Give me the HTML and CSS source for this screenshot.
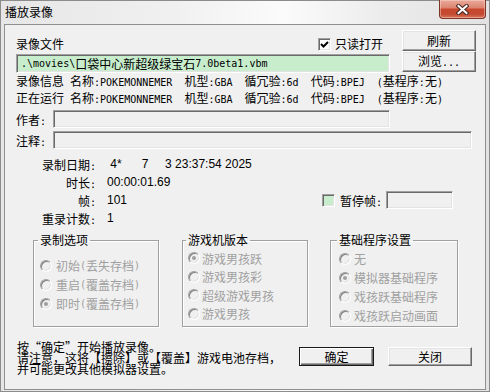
FILE: index.html
```html
<!DOCTYPE html>
<html lang="zh-CN">
<head>
    <meta charset="UTF-8">
    <title>播放录像</title>
    <link rel="stylesheet" href="styles.css">
</head>
<body>

    <div class="window">
        <div class="titlebar">
            <span class="title">播放录像</span>
            <div class="close">
                <svg width="13" height="11" viewBox="0 0 13 11">
                    <path d="M2.5 2 L10.5 9 M10.5 2 L2.5 9" stroke="#4a2a24" stroke-width="4.2" stroke-linecap="square"/>
                    <path d="M2.5 2 L10.5 9 M10.5 2 L2.5 9" stroke="#fff" stroke-width="2" stroke-linecap="square"/>
                </svg>
            </div>
        </div>

        <div class="client">
            <div class="top">
                <div class="file-col">
                    <div class="file-head">
                        <span>录像文件</span>
                        <span class="check">
                            <span class="box">
                                <svg width="9" height="9" viewBox="0 0 9 9"><path d="M1 4 L3.5 6.5 L8 2" stroke="#000" stroke-width="2" fill="none"/></svg>
                            </span>只读打开
                        </span>
                    </div>
                    <div class="field green path"><span class="m">.\movies\</span>口袋中心新超级绿宝石<span class="m">7.0beta1.vbm</span></div>
                </div>
                <div class="side-btns">
                    <button class="btn">刷新</button>
                    <button class="btn">浏览<span class="m">...</span></button>
                </div>
            </div>

            <div class="info">录像信息<span class="m"> </span>名称<span class="m">:POKEMONNEMER  </span>机型<span class="m">:GBA  </span>循冗验<span class="m">:6d  </span>代码<span class="m">:BPEJ  (</span>基程序<span class="m">:</span>无<span class="m">)</span></div>
            <div class="info">正在运行<span class="m"> </span>名称<span class="m">:POKEMONNEMER  </span>机型<span class="m">:GBA  </span>循冗验<span class="m">:6d  </span>代码<span class="m">:BPEJ  (</span>基程序<span class="m">:</span>无<span class="m">)</span></div>

            <div class="row">
                <span class="row-label">作者<span class="m">:</span></span>
                <div class="field author"></div>
            </div>
            <div class="row">
                <span class="row-label">注释<span class="m">:</span></span>
                <div class="field note-in"></div>
            </div>

            <div class="stats">
                <div class="stat">
                    <span class="lbl">录制日期<span class="m">:</span></span>
                    <span class="val date"> 4*      7     3 23:37:54 2025</span>
                </div>
                <div class="stat">
                    <span class="lbl">时长<span class="m">:</span></span>
                    <span class="val">00:00:01.69</span>
                </div>
                <div class="stat">
                    <span class="lbl">帧<span class="m">:</span></span>
                    <span class="val">101</span>
                    <span class="pause">
                        <span class="box green"></span>
                        <span>暂停帧<span class="m">:</span></span>
                        <span class="field pause-in"></span>
                    </span>
                </div>
                <div class="stat">
                    <span class="lbl">重录计数<span class="m">:</span></span>
                    <span class="val">1</span>
                </div>
            </div>

            <div class="groups">
                <fieldset class="grp g1">
                    <legend>录制选项</legend>
                    <div class="opt"><span class="radio"></span>初始<span class="m">(</span>丢失存档<span class="m">)</span></div>
                    <div class="opt"><span class="radio"></span>重启<span class="m">(</span>覆盖存档<span class="m">)</span></div>
                    <div class="opt"><span class="radio on"></span>即时<span class="m">(</span>覆盖存档<span class="m">)</span></div>
                </fieldset>
                <fieldset class="grp g2">
                    <legend>游戏机版本</legend>
                    <div class="opt"><span class="radio on"></span>游戏男孩跃</div>
                    <div class="opt"><span class="radio"></span>游戏男孩彩</div>
                    <div class="opt"><span class="radio"></span>超级游戏男孩</div>
                    <div class="opt"><span class="radio"></span>游戏男孩</div>
                </fieldset>
                <fieldset class="grp g3">
                    <legend>基础程序设置</legend>
                    <div class="opt"><span class="radio"></span>无</div>
                    <div class="opt"><span class="radio on"></span>模拟器基础程序</div>
                    <div class="opt"><span class="radio"></span>戏孩跃基础程序</div>
                    <div class="opt"><span class="radio"></span>戏孩跃启动画面</div>
                </fieldset>
            </div>

            <div class="footer">
                <div class="note">
                    <div class="note-line">按“确定”开始播放录像。</div>
                    <div class="note-line">请注意，这将【擦除】或【覆盖】游戏电池存档，</div>
                    <div class="note-line">并可能更改其他模拟器设置。</div>
                </div>
                <div class="actions">
                    <button class="btn default">确定</button>
                    <button class="btn wide">关闭</button>
                </div>
            </div>
        </div>
    </div>

</body>
</html>
```

FILE: styles.css
```css
* {
    box-sizing: border-box;
}

body {
    margin: 0;
    font-family: "Noto Sans CJK SC", sans-serif;
    font-size: 12px;
    color: #000;
    background: #e8e8e8;
}

.m {
    font-family: "DejaVu Sans Mono", monospace;
    font-size: 10px;
    white-space: pre;
}

/* window frame */
.window {
    width: 490px;
    height: 392px;
    border: 1px solid #8c8c8c;
    padding: 0 3px 1px 3px;
    background: linear-gradient(90deg, #e6e6e6 0%, #f0f0f0 35%, #fbfbfb 58%, #ececec 78%, #e2e2e2 100%);
    display: flex;
    flex-direction: column;
}

.titlebar {
    height: 23px;
    display: flex;
    align-items: flex-start;
}

.title {
    padding: 3px 0 0 1px;
    line-height: 16px;
}

.close {
    margin-left: auto;
    margin-top: -1px;
    width: 47px;
    height: 19px;
    border: 1px solid #7a3428;
    border-top: none;
    border-radius: 0 0 4px 4px;
    background: linear-gradient(#e9a99b 0%, #dc8672 42%, #c8472e 52%, #c24a30 78%, #d8755a 100%);
    box-shadow: inset 0 0 0 1px rgba(255, 220, 210, 0.45);
    display: flex;
    align-items: center;
    justify-content: center;
}

.client {
    height: 366px;
    background: #f0f0f0;
    border: 1px solid #8f8f8f;
}

/* 3d controls */
.field {
    background: #f0f0f0;
    border: 1px solid;
    border-color: #a0a0a0 #fff #fff #a0a0a0;
    box-shadow: inset 1px 1px 0 #696969, inset -1px -1px 0 #e3e3e3;
}

.green {
    background: #c7edcc;
}

.btn {
    font: inherit;
    color: #000;
    background: #f0f0f0;
    border: 1px solid;
    border-color: #fff #696969 #696969 #fff;
    box-shadow: inset -1px -1px 0 #a0a0a0, inset 1px 1px 0 #e3e3e3;
    padding: 0;
    width: 74px;
    height: 21px;
    line-height: 16px;
}

.btn.default {
    width: 75px;
    height: 19px;
    border: 1px solid #1a1a1a;
    box-shadow: inset 1px 1px 0 #fff, inset -1px -1px 0 #696969, inset -2px -2px 0 #a0a0a0;
}

.btn.wide {
    width: 84px;
    height: 19px;
}

.box {
    width: 13px;
    height: 13px;
    background: #fff;
    border: 1px solid;
    border-color: #a0a0a0 #fff #fff #a0a0a0;
    box-shadow: inset 1px 1px 0 #696969, inset -1px -1px 0 #e3e3e3;
    display: inline-flex;
    align-items: center;
    justify-content: center;
}

.box.green {
    background: #c7edcc;
}

/* top part */
.top {
    display: flex;
    margin-top: 5px;
    padding-left: 11px;
}

.file-col {
    width: 374px;
}

.file-head {
    display: flex;
    justify-content: space-between;
    align-items: center;
    padding: 7px 7px 0 0;
    line-height: 14px;
    margin-bottom: 3px;
}

.check {
    display: flex;
    align-items: center;
}

.check .box {
    margin-right: 4px;
}

.path {
    height: 19px;
    padding-left: 4px;
    display: flex;
    align-items: center;
    white-space: nowrap;
}

.side-btns {
    margin-left: 12px;
    display: flex;
    flex-direction: column;
}

.info {
    padding-left: 11px;
    line-height: 15px;
    white-space: nowrap;
}

.info:first-of-type {
    margin-top: 3px;
}

.row {
    display: flex;
    align-items: center;
    padding-left: 11px;
    height: 18px;
    margin-top: 3px;
}

.row:first-of-type {
    margin-top: 4px;
}

.row-label {
    width: 37px;
}

.author {
    width: 337px;
    height: 18px;
}

.note-in {
    width: 419px;
    height: 18px;
}

/* stats */
.stats {
    margin-top: 6px;
    padding: 0 32px 0 11px;
}

.stat {
    display: flex;
    align-items: center;
    height: 18px;
}

.lbl {
    width: 80px;
    text-align: right;
}

.val {
    margin-left: 11px;
    font-family: "Liberation Sans", sans-serif;
    font-size: 12px;
    white-space: pre;
}

.pause {
    margin-left: auto;
    display: flex;
    align-items: center;
}

.pause .box {
    margin-right: 5px;
}

.pause-in {
    width: 67px;
    height: 18px;
    margin-left: 4px;
}

/* group boxes */
.groups {
    display: flex;
    margin-top: 6px;
    padding-left: 28px;
}

.grp {
    margin: 0;
    height: 94px;
    min-width: 0;
    border: 1px solid #a0a0a0;
    box-shadow: 1px 1px 0 #fff, inset 1px 1px 0 #fff;
    padding: 2px 0 0 6px;
}

.grp legend {
    padding: 0 2px;
    margin-left: -2px;
    line-height: 14px;
}

.g1 {
    width: 126px;
    padding-top: 9px;
}

.g2 {
    width: 126px;
    margin-left: 23px;
    padding-left: 5px;
}

.g3 {
    width: 128px;
    margin-left: 22px;
    padding-left: 8px;
}

.opt {
    display: flex;
    align-items: center;
    height: 19px;
    color: #a0a0a0;
    white-space: nowrap;
}

.g2 .opt {
    height: 18.5px;
}

.radio {
    width: 12px;
    height: 12px;
    border-radius: 50%;
    border: 1px solid;
    border-color: #a0a0a0 #fff #fff #a0a0a0;
    box-shadow: inset 1px 1px 0 #808080, inset -1px -1px 0 #e3e3e3;
    background: #f0f0f0;
    margin-right: 4px;
    display: inline-flex;
    align-items: center;
    justify-content: center;
    flex: none;
}

.g2 .radio {
    margin-right: 2px;
}

.g3 .radio {
    margin-right: 3px;
}

.radio.on::after {
    content: "";
    width: 4px;
    height: 4px;
    border-radius: 50%;
    background: #a0a0a0;
}

/* footer */
.footer {
    display: flex;
    margin-top: 14px;
    padding: 0 13px 0 12px;
}

.note-line {
    height: 11px;
    line-height: 11px;
    white-space: nowrap;
}

.actions {
    margin-left: auto;
    margin-top: 6px;
    display: flex;
    gap: 14px;
    align-items: flex-start;
}
```
